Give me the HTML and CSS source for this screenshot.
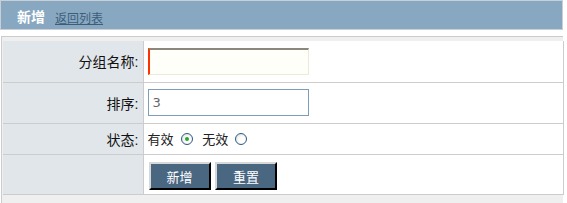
FILE: index.html
```html
<!DOCTYPE html>
<html lang="zh-CN">
<head>
  <meta charset="UTF-8" />
  <title>新增分组</title>
  <link rel="stylesheet" href="styles.css">
</head>
<body>
  <div class="page">
    <div class="title-bar">
      <span class="title">新增</span>
      <a class="back-link" href="#">返回列表</a>
    </div>

    <div class="form-box">
      <table class="form-table">
        <tr class="row-input">
          <th>分组名称:</th>
          <td><input class="txt txt-required" type="text"></td>
        </tr>
        <tr class="row-input">
          <th>排序:</th>
          <td><input class="txt" type="text" value="3"></td>
        </tr>
        <tr class="row-status">
          <th>状态:</th>
          <td>
            <label class="radio-item">有效 <input type="radio" name="status" checked></label>
            <label class="radio-item">无效 <input type="radio" name="status"></label>
          </td>
        </tr>
        <tr class="row-buttons">
          <th></th>
          <td>
            <button class="btn" type="button">新增</button>
            <button class="btn" type="button">重置</button>
          </td>
        </tr>
      </table>
    </div>
  </div>
</body>
</html>
```

FILE: styles.css
```css
* {
  margin: 0;
  padding: 0;
  box-sizing: border-box;
}

body {
  font-family: "Liberation Sans", "Noto Sans CJK SC", sans-serif;
  font-size: 13px;
  color: #222;
  background: #fff;
}

.page {
  width: 563px;
}

.title-bar {
  display: flex;
  align-items: center;
  gap: 10px;
  height: 30px;
  padding: 2px 0 0 16px;
  background: #87a8c0;
  border: 1px solid #c9cfd4;
}

.title {
  font-size: 14px;
  font-weight: bold;
  color: #fff;
}

.back-link {
  font-size: 12px;
  color: #3d5d7a;
  text-decoration: underline;
  margin-top: 2px;
}

.form-box {
  margin: 6px 0 0 1px;
  padding: 4px 0 10px 1px;
  background: #efefef;
  border-top: 1px solid #cccccc;
  border-left: 1px solid #cccccc;
}

.form-table {
  width: 561px;
  border-collapse: collapse;
  background: #fff;
}

.form-table th,
.form-table td {
  border-bottom: 1px solid #cccccc;
  border-right: 1px solid #cccccc;
  vertical-align: middle;
}

.form-table th {
  width: 140px;
  padding-right: 4px;
  text-align: right;
  font-size: 14px;
  font-weight: normal;
  color: #111;
  background: #e1e6eb;
}

.form-table td {
  padding-left: 4px;
}

.row-input th,
.row-input td {
  height: 41px;
}

.row-status th,
.row-status td {
  height: 31px;
}

.row-buttons th,
.row-buttons td {
  height: 40px;
  padding-top: 4px;
}

.txt {
  width: 161px;
  height: 27px;
  padding: 0 4px;
  font-family: "DejaVu Sans", sans-serif;
  font-size: 13px;
  color: #666;
  background: #fff;
  border: 1px solid #7f9db9;
  outline: none;
}

.txt-required {
  background: #fffffa;
  border-top: 2px solid #8b877a;
  border-left: 2px solid #ff3300;
  border-right: 1px solid #ecebd8;
  border-bottom: 1px solid #ecebd8;
}

.radio-item {
  display: inline-flex;
  align-items: center;
  gap: 7px;
  margin-right: 6px;
}

.radio-item input {
  appearance: none;
  width: 12px;
  height: 12px;
  border: 1px solid #2b5b87;
  border-radius: 50%;
  background: radial-gradient(circle at 60% 60%, #fff 30%, #d9d9d4 100%);
  position: relative;
}

.radio-item input:checked::after {
  content: "";
  position: absolute;
  left: 3px;
  top: 3px;
  width: 4px;
  height: 4px;
  border-radius: 50%;
  background: #2aa52a;
}

.btn {
  width: 62px;
  height: 28px;
  margin-left: 1px;
  font-family: "Noto Sans CJK SC", sans-serif;
  font-size: 13px;
  color: #fff;
  background: #4a6782;
  border: 2px solid;
  border-color: #d8d8d8 #000 #000 #d8d8d8;
  cursor: pointer;
}
```
